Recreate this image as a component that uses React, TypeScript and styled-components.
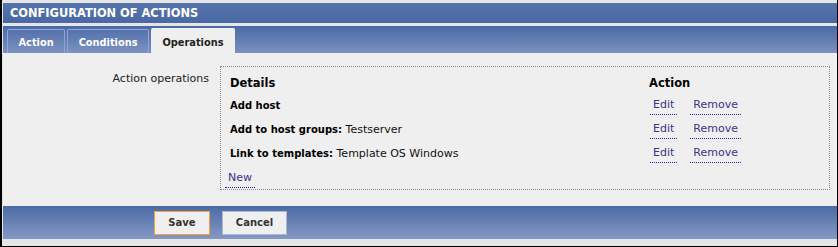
import React from 'react';
import styled, { createGlobalStyle } from 'styled-components';

const GlobalStyle = createGlobalStyle`
  html, body {
    margin: 0;
    padding: 0;
    background: #000;
  }
  body {
    font-family: "DejaVu Sans", Verdana, sans-serif;
    font-size: 11px;
    color: #000;
  }
`;

const Frame = styled.div`
  width: 838px;
  height: 247px;
  box-sizing: border-box;
  padding: 0 1px 1px 2px;
  background: #000;
`;

const Inner = styled.div`
  height: 100%;
  box-sizing: border-box;
  padding: 3px 0 0 1px;
  background: #e6e6e6;
  display: flex;
  flex-direction: column;
`;

const TitleBar = styled.div`
  height: 20px;
  box-sizing: border-box;
  padding: 3px 0 0 7px;
  background: linear-gradient(#5574ad, #4a69a4);
  color: #fff;
  font-weight: bold;
  font-size: 11.4px;
  line-height: 15px;
`;

const TabBar = styled.div`
  margin-top: 3px;
  height: 27px;
  box-sizing: border-box;
  padding-left: 4px;
  display: flex;
  align-items: flex-end;
  gap: 2px;
  background: linear-gradient(#4a69a4, #7b91c0);
`;

const Tab = styled.div<{ $active?: boolean }>`
  height: ${p => (p.$active ? 25 : 24)}px;
  box-sizing: border-box;
  padding: 2px 10.5px 0;
  display: flex;
  align-items: center;
  font-weight: bold;
  font-size: 9.8px;
  border: 1px solid ${p => (p.$active ? '#efefef' : '#8fa6d6')};
  border-bottom: none;
  border-radius: 2px 2px 0 0;
  color: ${p => (p.$active ? '#222' : '#fff')};
  background: ${p => (p.$active ? '#efefef' : 'linear-gradient(#5572ab, #7c92c1)')};
`;

const Content = styled.div`
  height: 153px;
  box-sizing: border-box;
  padding: 13px 7px 0 0;
  background: #efefef;
  display: grid;
  grid-template-columns: 206px 1fr;
  column-gap: 11px;
  align-items: start;
`;

const Label = styled.div`
  text-align: right;
  padding-top: 6px;
  line-height: 14px;
  color: #222;
`;

const OpsBox = styled.div`
  height: 124px;
  box-sizing: border-box;
  border: 1px dotted #8a8a8a;
  padding: 4px 0 0 9px;
  display: grid;
  grid-template-columns: 419px 1fr;
  grid-template-rows: 23px 23px 24px 24px 26px;
  align-items: center;
`;

const HeadCell = styled.div`
  font-weight: bold;
  font-size: 11.5px;
  color: #000;
`;

const Cell = styled.div`
  white-space: nowrap;
  color: #111;
`;

const Strong = styled.b`
  font-size: 10px;
  color: #000;
`;

const Links = styled.div`
  display: flex;
  gap: 13px;
  margin-left: 1px;
  padding-top: 2px;
`;

const Link = styled.a`
  display: inline-block;
  padding: 0 3px 2px;
  line-height: 14px;
  color: #40308a;
  text-decoration: none;
  border-bottom: 1px dotted #2020a8;
  cursor: pointer;
`;

const NewCell = styled.div`
  grid-column: 1 / span 2;
  margin-left: -5px;
  padding-top: 3px;
`;

const Footer = styled.div`
  height: 33px;
  box-sizing: border-box;
  padding-left: 151px;
  display: flex;
  align-items: center;
  gap: 12px;
  background: linear-gradient(#4b6ba6, #8598c4);
`;

const Button = styled.button<{ $primary?: boolean }>`
  height: 24px;
  box-sizing: border-box;
  padding: 0;
  width: ${p => (p.$primary ? 56 : 65)}px;
  font-family: "DejaVu Sans", Verdana, sans-serif;
  font-weight: bold;
  font-size: 10px;
  color: #333;
  background: #efefef;
  border: 1px solid ${p => (p.$primary ? '#f2a33a' : '#a9b8d6')};
  cursor: pointer;
`;

const ops = [
  { label: 'Add host', value: '' },
  { label: 'Add to host groups:', value: 'Testserver' },
  { label: 'Link to templates:', value: 'Template OS Windows' },
];

const App = () => {
  return (
    <Frame>
      <GlobalStyle />
      <Inner>
        <TitleBar>CONFIGURATION OF ACTIONS</TitleBar>
        <TabBar>
          <Tab>Action</Tab>
          <Tab>Conditions</Tab>
          <Tab $active>Operations</Tab>
        </TabBar>
        <Content>
          <Label>Action operations</Label>
          <OpsBox>
            <HeadCell>Details</HeadCell>
            <HeadCell>Action</HeadCell>
            {ops.map(op => (
              <React.Fragment key={op.label}>
                <Cell>
                  <Strong>{op.label}</Strong>
                  {op.value && ' ' + op.value}
                </Cell>
                <Links>
                  <Link>Edit</Link>
                  <Link>Remove</Link>
                </Links>
              </React.Fragment>
            ))}
            <NewCell>
              <Link>New</Link>
            </NewCell>
          </OpsBox>
        </Content>
        <Footer>
          <Button $primary>Save</Button>
          <Button>Cancel</Button>
        </Footer>
      </Inner>
    </Frame>
  );
};

export default App;
